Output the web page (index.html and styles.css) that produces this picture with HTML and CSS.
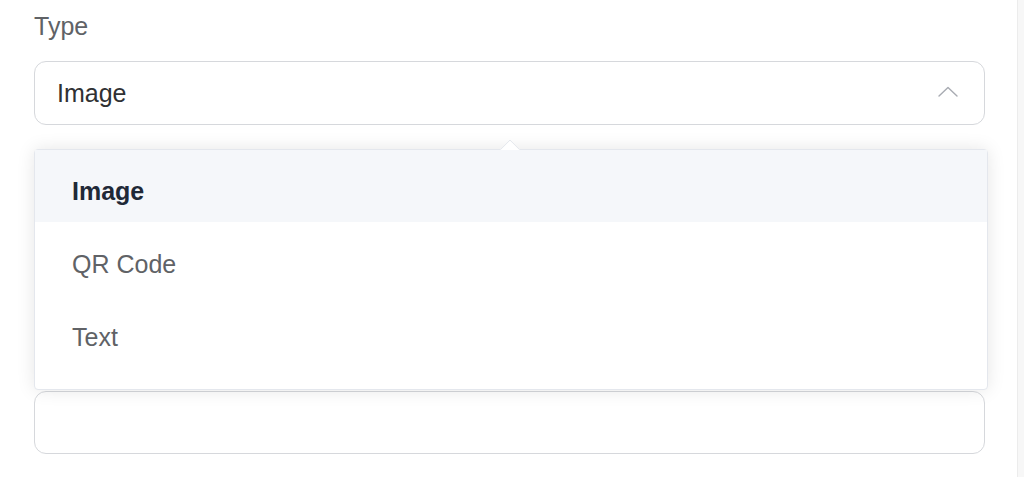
FILE: index.html
```html
<!DOCTYPE html>
<html lang="en">
<head>
  <meta charset="UTF-8">
  <meta name="viewport" content="width=device-width, initial-scale=1.0">
  <title>Type select</title>

  <link rel="stylesheet" href="styles.css">
</head>
<body>
  <div class="panel">
    <div class="form-item">
      <label class="label">Type</label>

      <div class="select is-open">
        <div class="select-input">
          <span class="select-value">Image</span>
          <svg class="chevron" width="20" height="11" viewBox="0 0 20 11">
            <path d="M1 10 L10 1.5 L19 10" fill="none" stroke="#a8abb2" stroke-width="1.4" stroke-linecap="round" stroke-linejoin="round"/>
          </svg>
        </div>

        <div class="dropdown">
          <div class="dropdown-arrow"></div>
          <ul class="options">
            <li class="option selected">Image</li>
            <li class="option">QR Code</li>
            <li class="option">Text</li>
          </ul>
        </div>
      </div>
    </div>

    <div class="form-item next">
      <div class="input"></div>
    </div>
  </div>
</body>
</html>
```

FILE: styles.css
```css
* {
  box-sizing: border-box;
}

html {
  background: #f7f7f7;
}

body {
  margin: 0;
  font-family: 'Liberation Sans', Arial, 'Helvetica Neue', sans-serif;
  font-size: 25px;
  color: #333;
}

.panel {
  width: 1018px;
  min-height: 477px;
  background: #fff;
  border-right: 1px solid #ececec;
  padding: 8px 32px 0 34px;
}

.label {
  display: block;
  height: 36px;
  line-height: 36px;
  color: #606266;
  margin-bottom: 17px;
}

.select {
  position: relative;
}

.select-input,
.input {
  display: flex;
  align-items: center;
  width: 951px;
  height: 64px;
  border: 1px solid #d6d8dc;
  border-radius: 12px;
  background: #fff;
  padding: 0 26px 0 22px;
}

.select-value {
  flex: 1;
  line-height: 62px;
  color: #303133;
}

.chevron {
  display: block;
  margin-top: -3px;
}

.form-item.next {
  margin-top: 266px;
}

.input {
  height: 63px;
}

/* popper */
.dropdown {
  position: absolute;
  top: calc(100% + 24px);
  left: 0;
  width: 954px;
  height: 241px;
  background: #fff;
  border: 1px solid #e4e7ed;
  border-radius: 4px;
  box-shadow: 0 0 18px rgba(0, 0, 0, 0.1);
  z-index: 10;
}

.dropdown-arrow {
  position: absolute;
  top: -8px;
  left: 468px;
  width: 14px;
  height: 14px;
  background: #fff;
  border-top: 1px solid #e4e7ed;
  border-left: 1px solid #e4e7ed;
  transform: rotate(45deg);
  border-top-left-radius: 2px;
}

.options {
  list-style: none;
  margin: 0;
  padding: 0;
  position: relative;
}

.option {
  height: 73px;
  padding: 10px 37px 0;
  line-height: 62px;
  color: #606266;
}

.option.selected {
  background: #f5f7fa;
  color: #1f2937;
  font-weight: 700;
  height: 72px;
}

.option.selected + .option {
  margin-top: 1px;
}
```
